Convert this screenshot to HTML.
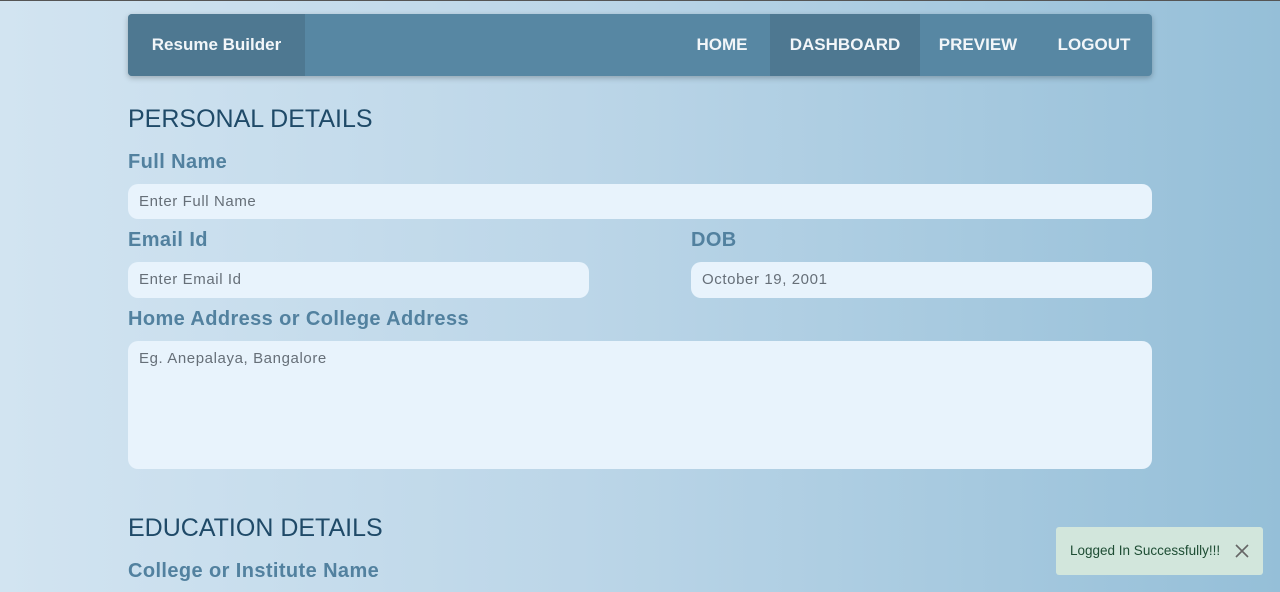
<!DOCTYPE html>
<html><head><meta charset="utf-8"><style>
*{box-sizing:border-box;margin:0;padding:0}
body{width:1280px;height:592px;overflow:hidden;font-family:"Liberation Sans",sans-serif;background:linear-gradient(90deg,#d2e4f1 0%,#bcd6e8 45%,#95bfd8 100%);position:relative;border-top:1px solid #555}
.nav{position:absolute;left:128px;top:13px;width:1024px;height:62px;background:#5787a3;border-radius:4px;box-shadow:0 2px 6px rgba(0,0,0,.25);color:#f2f6f9;font-weight:bold;font-size:17px}
.nav div{position:absolute;top:0;height:62px;line-height:62px;text-align:center}
.brand{left:0;width:177px;background:#4e7891;border-radius:4px 0 0 4px}
.dash{background:#4e7891}
h2{position:absolute;left:128px;font-weight:normal;color:#1f4a68;font-size:25px}
.lbl{position:absolute;color:#52819f;font-size:20px;font-weight:bold;letter-spacing:.4px}
.in{position:absolute;background:#e8f3fc;border-radius:10px;color:#666f78;font-size:15px;padding-left:11px;letter-spacing:.6px}
.toast{position:absolute;left:1056px;top:526px;width:207px;height:48px;background:#d2e6dc;border-radius:3px;color:#1e4d34;font-size:13.5px;line-height:48px;padding-left:14px}
</style></head><body>
<div class="nav">
<div class="brand">Resume Builder</div>
<div style="left:552px;width:84px">HOME</div>
<div class="dash" style="left:642px;width:150px">DASHBOARD</div>
<div style="left:800px;width:100px">PREVIEW</div>
<div style="left:920px;width:92px">LOGOUT</div>
</div>
<h2 style="top:104px">PERSONAL DETAILS</h2>
<div class="lbl" style="left:128px;top:150px">Full Name</div>
<div class="in" style="left:128px;top:183px;width:1024px;height:35px;line-height:35px">Enter Full Name</div>
<div class="lbl" style="left:128px;top:228px">Email Id</div>
<div class="lbl" style="left:691px;top:228px">DOB</div>
<div class="in" style="left:128px;top:261px;width:461px;height:36px;line-height:36px">Enter Email Id</div>
<div class="in" style="left:691px;top:261px;width:461px;height:36px;line-height:36px">October 19, 2001</div>
<div class="lbl" style="left:128px;top:307px">Home Address or College Address</div>
<div class="in" style="left:128px;top:340px;width:1024px;height:128px;padding-top:9px">Eg. Anepalaya, Bangalore</div>
<h2 style="top:513px">EDUCATION DETAILS</h2>
<div class="lbl" style="left:128px;top:559px">College or Institute Name</div>
<div class="toast">Logged In Successfully!!!<svg style="position:absolute;left:179px;top:17px" width="14" height="14" viewBox="0 0 14 14"><path d="M1 1L13 13M13 1L1 13" stroke="#666" stroke-width="1.6"/></svg></div>
</body></html>
